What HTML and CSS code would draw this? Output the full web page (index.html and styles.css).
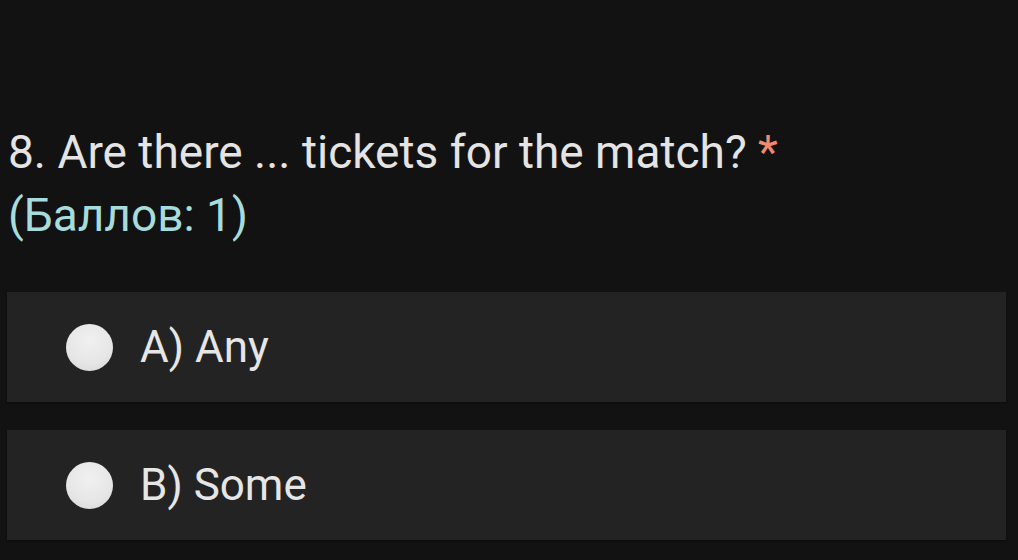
FILE: index.html
```html
<!DOCTYPE html>
<html lang="ru">
<head>
<meta charset="utf-8">
<link rel="stylesheet" href="styles.css">
</head>
<body>
<div class="page">
  <div class="question">
    <div class="title">8. Are there ... tickets for the match? <span class="req">*</span></div>
    <div class="points">(Баллов: 1)</div>
  </div>
  <div class="options">
    <label class="option"><span class="radio"></span><span class="opt-text">A) Any</span></label>
    <label class="option"><span class="radio"></span><span class="opt-text">B) Some</span></label>
  </div>
</div>
</body>
</html>
```

FILE: styles.css
```css
html, body {
  margin: 0;
  padding: 0;
  background: #121212;
}
.page {
  width: 1018px;
  height: 560px;
  box-sizing: border-box;
  padding: 121px 12px 0 7px;
  font-family: Roboto, "Noto Sans", sans-serif;
  overflow: hidden;
}
.question {
  padding-left: 1px;
  font-size: 46px;
  line-height: 63px;
}
.title {
  color: #e4e4e4;
}
.req {
  color: #f08a6e;
}
.points {
  color: #a6dcdc;
}
.options {
  margin-top: 45px;
  display: flex;
  flex-direction: column;
  gap: 28px;
}
.option {
  height: 110px;
  background: #232323;
  display: flex;
  align-items: center;
  padding-left: 59px;
  gap: 27px;
  box-shadow: 0 1px 2px rgba(0,0,0,0.4);
}
.radio {
  width: 47px;
  height: 47px;
  border-radius: 50%;
  background: radial-gradient(circle at 50% 35%, #f0f0f0 0%, #e6e6e6 60%, #d4d4d4 100%);
  flex: none;
}
.opt-text {
  font-size: 44px;
  color: #e6e6e6;
}
```
